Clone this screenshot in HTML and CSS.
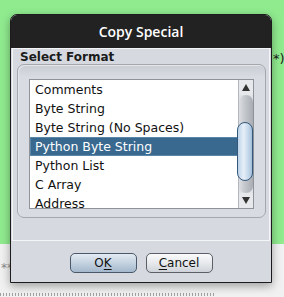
FILE: index.html
```html
<!DOCTYPE html>
<html lang="en">

<head>
    <meta charset="UTF-8">
    <title>Copy Special</title>
    <link rel="stylesheet" href="styles.css">
</head>

<body>
    <div id="desk">
        <div class="green"><span class="frag">*)</span></div>
        <div class="page">
            <div class="star">**</div>
            <div class="dots"></div>
        </div>

        <div class="dialog">
            <div class="titlebar">Copy Special</div>
            <div class="panel">
                <div class="label">Select Format</div>
                <div class="group">
                    <div class="listbox">
                        <ul class="items">
                            <li>Comments</li>
                            <li>Byte String</li>
                            <li>Byte String (No Spaces)</li>
                            <li class="sel">Python Byte String</li>
                            <li>Python List</li>
                            <li>C Array</li>
                            <li>Address</li>
                        </ul>
                        <div class="scroll">
                            <div class="arrow up"></div>
                            <div class="track">
                                <div class="groove"></div>
                                <div class="thumb"></div>
                            </div>
                            <div class="arrow down"></div>
                        </div>
                    </div>
                </div>
            </div>
            <div class="buttons">
                <button class="btn ok">O<u>K</u></button>
                <button class="btn"><u>C</u>ancel</button>
            </div>
        </div>
    </div>
</body>

</html>
```

FILE: styles.css
```css
* {
    margin: 0;
    padding: 0;
    box-sizing: border-box;
}

body {
    font-family: "DejaVu Sans", sans-serif;
    font-size: 12px;
    color: #111;
    background: #f1f1f1;
}

#desk {
    position: relative;
    width: 284px;
    height: 297px;
    overflow: hidden;
}

.green {
    height: 244px;
    background: #90eb8f;
    padding: 51px 0 0 273px;
    font-size: 13px;
    color: #1a1a1a;
}

.page {
    height: 53px;
    background: #f1f1f1;
    padding-top: 18px;
}

.star {
    color: #8a8a8a;
    padding-left: 1px;
    font-size: 12px;
    line-height: 12px;
}

.dots {
    margin-top: 19px;
    width: 215px;
    height: 3px;
    background: repeating-linear-gradient(90deg, #a0a0a0 0 1px, transparent 1px 3px);
}

/* dialog window */
.dialog {
    position: absolute;
    left: 10px;
    top: 14px;
    width: 262px;
    height: 269px;
    border: 1px solid #1c1c1c;
    border-radius: 7px 7px 0 0;
    background: #d6d9df;
    padding: 0 1px;
    box-shadow: 0 3px 10px rgba(0, 0, 0, 0.35);
}

.titlebar {
    height: 33px;
    margin: 0 -1px;
    background: #222;
    border-radius: 6px 6px 0 0;
    color: #fff;
    font-family: "Open Sans", sans-serif;
    font-weight: 600;
    font-size: 14px;
    line-height: 33px;
    text-align: center;
}

.panel {
    height: 193px;
    border: 1px solid #f4f5f7;
}

.label {
    height: 15px;
    padding: 1px 0 0 7px;
    font-weight: bold;
    line-height: 14px;
    color: #1b1b1b;
}

.group {
    margin: 0 3px 0 4px;
    height: 154px;
    border: 1px solid #a4a7ae;
    border-radius: 7px;
    background: linear-gradient(#c9ccd2, #d8dbe1 12px);
    box-shadow: inset 1px 1px 1px #e6e8ec;
    padding: 14px 0 0 11px;
}

.listbox {
    width: 225px;
    height: 130px;
    border: 1px solid #8e9299;
    background: #fff;
    display: grid;
    grid-template-columns: 1fr 15px;
}

.items {
    list-style: none;
    overflow: hidden;
    font-size: 12.5px;
}

.items li {
    height: 19px;
    line-height: 19px;
    padding-left: 5px;
    white-space: nowrap;
}

.items .sel {
    background: #39698f;
    border: 1px solid #5a86aa;
    line-height: 17px;
    padding-left: 4px;
    color: #fff;
}

/* scrollbar */
.scroll {
    display: flex;
    flex-direction: column;
    background: #e3e5e9;
    border-left: 1px solid #b3b6bc;
}

.arrow {
    height: 15px;
    display: flex;
    align-items: center;
    justify-content: center;
    background: #e6e8eb;
}

.arrow::after {
    content: "";
    border-left: 4px solid transparent;
    border-right: 4px solid transparent;
}

.up::after {
    border-bottom: 7px solid #333;
}

.down::after {
    border-top: 7px solid #333;
}

.track {
    flex: 1;
    position: relative;
    background: #dfe1e5;
}

.groove {
    height: 100%;
    border-radius: 7px;
    background: linear-gradient(90deg, #dcdee2, #c2c5ca 45%, #a9adb3);
}

.thumb {
    position: absolute;
    left: -2px;
    right: 0;
    top: 27px;
    height: 59px;
    border: 1px solid #35587a;
    border-radius: 8px;
    background: linear-gradient(90deg, #bcd3ea, #e6eff8 40%, #c8daec 70%, #a5c0da);
}

/* buttons */
.buttons {
    height: 41px;
    display: flex;
    justify-content: center;
    gap: 9px;
    padding-top: 12px;
}

.btn {
    width: 67px;
    height: 20px;
    border: 1px solid #5a5f68;
    border-radius: 5px;
    background: linear-gradient(#fbfbfc, #e7e9ec 50%, #cfd3d9);
    font-family: "DejaVu Sans", sans-serif;
    font-size: 12px;
    color: #111;
}

.btn.ok {
    border-color: #4a5869;
    background: linear-gradient(#e3eaf2, #c4d2e0 50%, #a4b8cc);
}

.btn u {
    text-underline-offset: 2px;
}
```
